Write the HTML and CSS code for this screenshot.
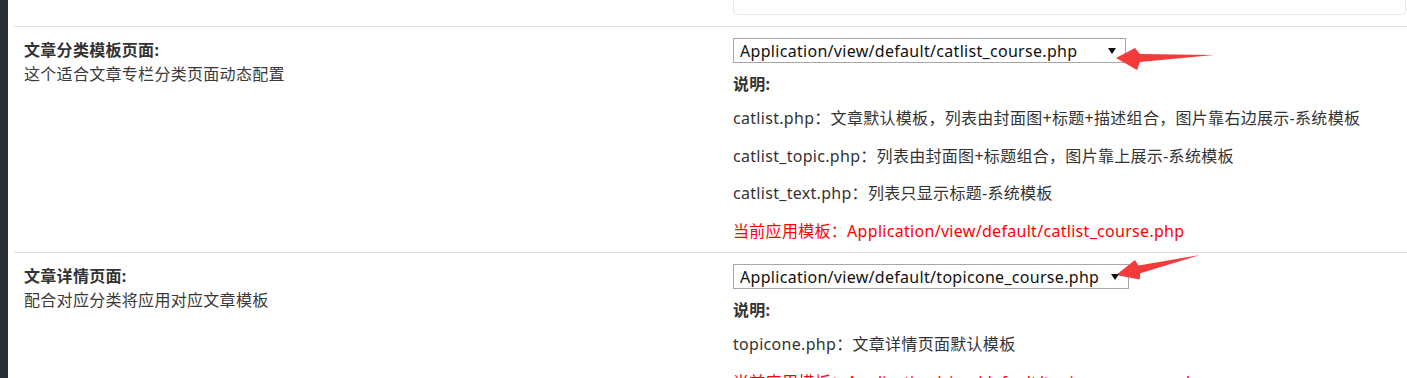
FILE: index.html
```html
<!DOCTYPE html>
<html lang="zh-CN">

<head>
    <meta charset="UTF-8">
    <title>模板设置</title>
    <link rel="stylesheet" href="styles.css">
</head>

<body>
    <div class="layout">
        <aside class="sidebar"></aside>

        <main class="content">
            <div class="form-row form-row-top">
                <div class="row-label"></div>
                <div class="row-field">
                    <div class="prev-box"></div>
                </div>
            </div>

            <div class="form-row">
                <div class="row-label">
                    <div class="label-title">文章分类模板页面:</div>
                    <div class="label-desc">这个适合文章专栏分类页面动态配置</div>
                </div>
                <div class="row-field">
                    <div class="select-wrap">
                        <select class="tpl-select tpl-select-cat">
                            <option>Application/view/default/catlist_course.php</option>
                        </select>
                        <svg class="mark-arrow mark-arrow-1" width="110" height="35" viewBox="0 0 110 35">
                            <polygon points="6,18 25,8 30,14 104,15 30,22 27,30" fill="#f33b3b" />
                        </svg>
                    </div>
                    <div class="help-title">说明:</div>
                    <p class="help-item">catlist.php：文章默认模板，列表由封面图+标题+描述组合，图片靠右边展示-系统模板</p>
                    <p class="help-item">catlist_topic.php：列表由封面图+标题组合，图片靠上展示-系统模板</p>
                    <p class="help-item">catlist_text.php：列表只显示标题-系统模板</p>
                    <p class="help-item current">当前应用模板：Application/view/default/catlist_course.php</p>
                </div>
            </div>

            <div class="form-row">
                <div class="row-label">
                    <div class="label-title">文章详情页面:</div>
                    <div class="label-desc">配合对应分类将应用对应文章模板</div>
                </div>
                <div class="row-field">
                    <div class="select-wrap">
                        <select class="tpl-select tpl-select-topic">
                            <option>Application/view/default/topicone_course.php</option>
                        </select>
                        <svg class="mark-arrow mark-arrow-2" width="95" height="35" viewBox="0 0 95 35">
                            <polygon points="6,24 25,9 28.5,14.5 90,4 30.3,22.3 29.7,28.6" fill="#f33b3b" />
                        </svg>
                    </div>
                    <div class="help-title">说明:</div>
                    <p class="help-item">topicone.php：文章详情页面默认模板</p>
                    <p class="help-item current">当前应用模板：Application/view/default/topicone_course.php</p>
                </div>
            </div>
        </main>
    </div>
</body>

</html>
```

FILE: styles.css
```css
body {
    margin: 0;
    font-family: "Noto Sans", "Noto Sans CJK SC", sans-serif;
    font-size: 16px;
    letter-spacing: 0.3px;
    color: #333;
    background: #fff;
    overflow: hidden;
}

.layout {
    display: flex;
    min-height: 100vh;
}

.sidebar {
    width: 8px;
    flex-shrink: 0;
    background: #263238;
}

.content {
    flex: 1;
    padding-left: 6px;
}

.form-row {
    display: flex;
    border-top: 1px solid #e0e0e0;
    padding: 11px 0 10px;
}

.form-row-top {
    border-top: none;
    padding: 0 0 11px;
}

.row-label {
    width: 709px;
    padding-left: 10px;
    flex-shrink: 0;
}

.row-field {
    flex: 1;
}

.prev-box {
    height: 14px;
    border: 1px solid #e6e6e6;
    border-top: none;
    border-radius: 0 0 5px 5px;
    margin-right: 1px;
}

.label-title {
    font-weight: 700;
    line-height: 24px;
}

.label-desc {
    line-height: 25px;
    color: #3a3a3a;
}

.select-wrap {
    position: relative;
    display: inline-block;
}

.select-wrap::after {
    content: "";
    position: absolute;
    right: 10px;
    top: 10px;
    border-left: 4px solid transparent;
    border-right: 4px solid transparent;
    border-top: 6px solid #111;
    pointer-events: none;
}

.tpl-select {
    appearance: none;
    -webkit-appearance: none;
    display: block;
    height: 25px;
    padding: 0 6px;
    border: 1px solid #a6a6a6;
    border-radius: 0;
    background: #fff;
    font-family: inherit;
    font-size: 16px;
    letter-spacing: 0.3px;
    color: #111;
}

.tpl-select-cat {
    width: 393px;
}

.tpl-select-topic {
    width: 396px;
}

.mark-arrow {
    position: absolute;
}

.mark-arrow-1 {
    left: 377px;
    top: 2px;
}

.mark-arrow-2 {
    left: 377px;
    top: -13px;
}

.help-title {
    margin-top: 10px;
    font-weight: 700;
    line-height: 22px;
}

.help-item {
    margin: 15px 0 0;
    line-height: 22.5px;
}

.help-title + .help-item {
    margin-top: 12px;
}

.current {
    color: #f00;
}
```
